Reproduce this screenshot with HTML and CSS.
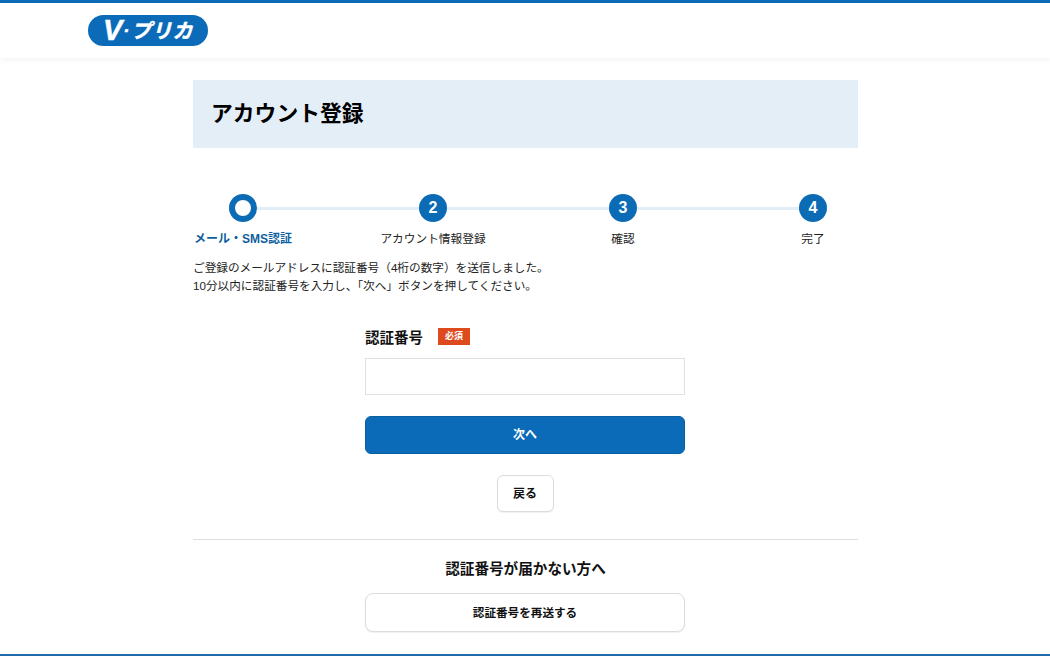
FILE: index.html
```html
<!DOCTYPE html>
<html lang="ja">
<head>
<meta charset="utf-8">
<title>アカウント登録</title>
<link rel="stylesheet" href="styles.css">
</head>
<body>
<header class="site-header">
  <div class="logo"><span class="logo-v">V</span><span class="logo-dot">·</span><span class="logo-kana">プリカ</span></div>
</header>
<main class="page">
  <h1 class="page-title">アカウント登録</h1>
  <ol class="steps">
    <li class="step step-current"><span class="step-dot"></span><span class="step-label">メール・SMS認証</span></li>
    <li class="step"><span class="step-dot">2</span><span class="step-label">アカウント情報登録</span></li>
    <li class="step"><span class="step-dot">3</span><span class="step-label">確認</span></li>
    <li class="step"><span class="step-dot">4</span><span class="step-label">完了</span></li>
  </ol>
  <p class="intro">ご登録のメールアドレスに認証番号（4桁の数字）を送信しました。<br>10分以内に認証番号を入力し、「次へ」ボタンを押してください。</p>
  <form class="form">
    <div class="field-label"><label for="code">認証番号</label><span class="required">必須</span></div>
    <input class="input" id="code" type="text">
    <button class="btn-primary" type="button">次へ</button>
    <button class="btn-back" type="button">戻る</button>
  </form>
  <section class="resend">
    <h2 class="resend-title">認証番号が届かない方へ</h2>
    <button class="btn-resend" type="button">認証番号を再送する</button>
  </section>
</main>
</body>
</html>
```
FILE: styles.css
```css
* { box-sizing: border-box; }
html, body { margin: 0; height: 100%; }
body {
  height: 656px;
  overflow: hidden;
  background: #fff;
  color: #111;
  font-family: "Liberation Sans", "Noto Sans CJK JP", sans-serif;
  border-bottom: 2px solid #1f6aa8;
}
.site-header {
  height: 58px;
  border-top: 3px solid #0c6bb5;
  padding: 12px 0 0 88px;
  box-shadow: 0 2px 6px rgba(0, 0, 0, 0.05);
}
.logo {
  width: 120px;
  height: 31px;
  border-radius: 16px;
  background: #0c6bb8;
  color: #fff;
  display: flex;
  align-items: center;
  justify-content: center;
  font-style: italic;
  font-weight: 700;
  line-height: 1;
  -webkit-text-stroke: 0.5px #fff;
}
.logo-v { font-size: 29px; }
.logo-dot { font-size: 18px; margin: 0 2px 0 1px; }
.logo-kana { font-size: 20px; letter-spacing: 0.6px; }
.page {
  width: 665px;
  margin: 22px 0 0 193px;
}
.page-title {
  margin: 0;
  height: 68px;
  padding-left: 18px;
  background: #e4eef7;
  color: #000;
  font-size: 21.8px;
  font-weight: 700;
  line-height: 68px;
}
.steps {
  list-style: none;
  width: 670px;
  margin: 46px 0 0;
  padding: 0;
  display: flex;
  justify-content: space-between;
  background: linear-gradient(#e0eefa, #e0eefa) no-repeat 50px 13px / 570px 3px;
}
.step {
  width: 100px;
  display: flex;
  flex-direction: column;
  align-items: center;
  gap: 9px;
}
.step-dot {
  width: 28px;
  height: 28px;
  border-radius: 50%;
  background: #0c6bb5;
  color: #fff;
  font-size: 16px;
  font-weight: 700;
  line-height: 28px;
  text-align: center;
}
.step-current .step-dot {
  background: #fff;
  border: 6px solid #0c6bb5;
}
.step-label {
  font-size: 11.7px;
  line-height: 16px;
  white-space: nowrap;
  color: #222;
}
.step-current .step-label {
  color: #0f5f9f;
  font-size: 12px;
  font-weight: 700;
}
.intro {
  margin: 12px 0 0;
  font-size: 11.65px;
  line-height: 18px;
  color: #222;
}
.form {
  width: 320px;
  margin: 32px 0 0 172px;
  display: flex;
  flex-direction: column;
  align-items: center;
}
.field-label {
  align-self: stretch;
  display: flex;
  align-items: center;
  gap: 15px;
  height: 18px;
  font-size: 14.5px;
  font-weight: 700;
}
.required {
  width: 32px;
  height: 17px;
  margin-top: 1px;
  background: #dc4a1e;
  color: #fff;
  font-size: 9px;
  line-height: 17px;
  text-align: center;
}
.input {
  width: 100%;
  height: 37px;
  margin-top: 13px;
  border: 1px solid #e0e0e0;
  background: #fff;
}
.btn-primary {
  width: 100%;
  height: 38px;
  margin-top: 21px;
  padding: 0 0 3px;
  border: 1px solid #0a5f9f;
  border-radius: 6px;
  background: #0c6bb8;
  color: #fff;
  font: inherit;
  font-size: 12px;
  font-weight: 700;
}
.btn-back {
  width: 57px;
  height: 37px;
  margin-top: 21px;
  padding: 0 0 2px;
  border: 1px solid #dcdcdc;
  border-radius: 6px;
  background: #fff;
  color: #111;
  font: inherit;
  font-size: 12px;
  font-weight: 700;
  box-shadow: 0 1px 1px rgba(0, 0, 0, 0.06);
}
.resend {
  margin-top: 27px;
  padding-top: 19px;
  border-top: 1px solid #dedede;
  display: flex;
  flex-direction: column;
  align-items: center;
}
.resend-title {
  margin: 0;
  font-size: 14.6px;
  font-weight: 700;
  line-height: 20px;
}
.btn-resend {
  width: 320px;
  height: 39px;
  margin: 14px 0 0 -1px;
  padding: 0 0 2px;
  border: 1px solid #dcdcdc;
  border-radius: 8px;
  background: #fff;
  color: #111;
  font: inherit;
  font-size: 11.6px;
  font-weight: 700;
  box-shadow: 0 1px 1px rgba(0, 0, 0, 0.06);
}
```
